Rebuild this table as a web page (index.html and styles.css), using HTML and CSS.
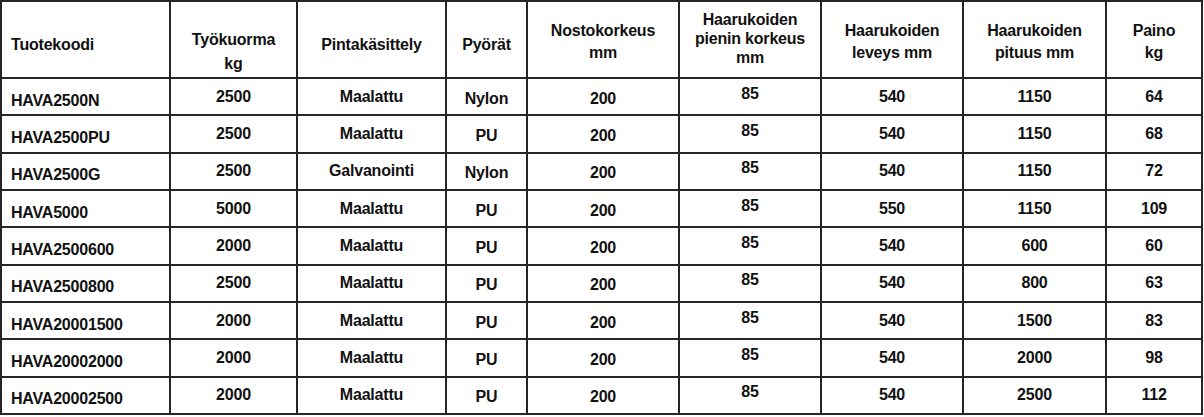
FILE: index.html
```html
<!DOCTYPE html>
<html lang="fi">
<head>
<meta charset="utf-8">
<title>Tuotetaulukko</title>
<link rel="stylesheet" href="styles.css">
</head>
<body>
<table class="spec">
  <colgroup>
    <col class="c1"><col class="c2"><col class="c3"><col class="c4"><col class="c5"><col class="c6"><col class="c7"><col class="c8"><col class="c9">
  </colgroup>
  <thead>
    <tr class="head">
      <th class="left"><span class="h1">Tuotekoodi</span></th>
      <th><span class="h-low">Työkuorma<br>kg</span></th>
      <th><span class="h1">Pintakäsittely</span></th>
      <th><span class="h1">Pyörät</span></th>
      <th><span class="h2">Nostokorkeus<br>mm</span></th>
      <th><span class="h3">Haarukoiden<br>pienin korkeus<br>mm</span></th>
      <th><span class="h2">Haarukoiden<br>leveys mm</span></th>
      <th><span class="h2">Haarukoiden<br>pituus mm</span></th>
      <th><span class="h2">Paino<br>kg</span></th>
    </tr>
  </thead>
  <tbody>
    <tr><td>HAVA2500N</td><td>2500</td><td>Maalattu</td><td>Nylon</td><td>200</td><td>85</td><td>540</td><td>1150</td><td>64</td></tr>
    <tr><td>HAVA2500PU</td><td>2500</td><td>Maalattu</td><td>PU</td><td>200</td><td>85</td><td>540</td><td>1150</td><td>68</td></tr>
    <tr><td>HAVA2500G</td><td>2500</td><td>Galvanointi</td><td>Nylon</td><td>200</td><td>85</td><td>540</td><td>1150</td><td>72</td></tr>
    <tr><td>HAVA5000</td><td>5000</td><td>Maalattu</td><td>PU</td><td>200</td><td>85</td><td>550</td><td>1150</td><td>109</td></tr>
    <tr><td>HAVA2500600</td><td>2000</td><td>Maalattu</td><td>PU</td><td>200</td><td>85</td><td>540</td><td>600</td><td>60</td></tr>
    <tr><td>HAVA2500800</td><td>2500</td><td>Maalattu</td><td>PU</td><td>200</td><td>85</td><td>540</td><td>800</td><td>63</td></tr>
    <tr><td>HAVA20001500</td><td>2000</td><td>Maalattu</td><td>PU</td><td>200</td><td>85</td><td>540</td><td>1500</td><td>83</td></tr>
    <tr><td>HAVA20002000</td><td>2000</td><td>Maalattu</td><td>PU</td><td>200</td><td>85</td><td>540</td><td>2000</td><td>98</td></tr>
    <tr><td>HAVA20002500</td><td>2000</td><td>Maalattu</td><td>PU</td><td>200</td><td>85</td><td>540</td><td>2500</td><td>112</td></tr>
  </tbody>
</table>
</body>
</html>
```

FILE: styles.css
```css
html, body {
  margin: 0;
  padding: 0;
  background: #ffffff;
}

.spec {
  border-collapse: collapse;
  table-layout: fixed;
  width: 1203px;
  font-family: "Liberation Sans", Arial, sans-serif;
  font-weight: bold;
  font-size: 16px;
  letter-spacing: -0.2px;
  color: #111111;
}

.c1 { width: 169px; }
.c2 { width: 127px; }
.c3 { width: 149px; }
.c4 { width: 81px; }
.c5 { width: 152px; }
.c6 { width: 142px; }
.c7 { width: 142px; }
.c8 { width: 143px; }
.c9 { width: 96px; }

.spec th,
.spec td {
  border: 2px solid #262626;
  text-align: center;
  padding: 0 2px;
  white-space: nowrap;
}

.spec th {
  height: 75px;
  vertical-align: top;
  font-weight: bold;
  line-height: 22px;
}

.spec td {
  height: 27.33px;
  line-height: 18px;
  padding-top: 4px;
  padding-bottom: 4px;
  vertical-align: middle;
}

.spec .left,
.spec td:first-child {
  text-align: left;
  padding-left: 9px;
}

.spec td:first-child {
  padding-top: 8px;
  padding-bottom: 0;
}

.spec td:nth-child(4),
.spec td:nth-child(5) {
  padding-top: 6px;
  padding-bottom: 2px;
}

.spec td:nth-child(6) {
  padding-top: 1px;
  padding-bottom: 7px;
}

.h1 {
  display: block;
  padding-top: 32px;
}

.h2 {
  display: block;
  padding-top: 18px;
}

.h3 {
  display: block;
  padding-top: 8px;
  line-height: 19px;
}

.h-low {
  display: block;
  padding-top: 26px;
  line-height: 24px;
}
```
